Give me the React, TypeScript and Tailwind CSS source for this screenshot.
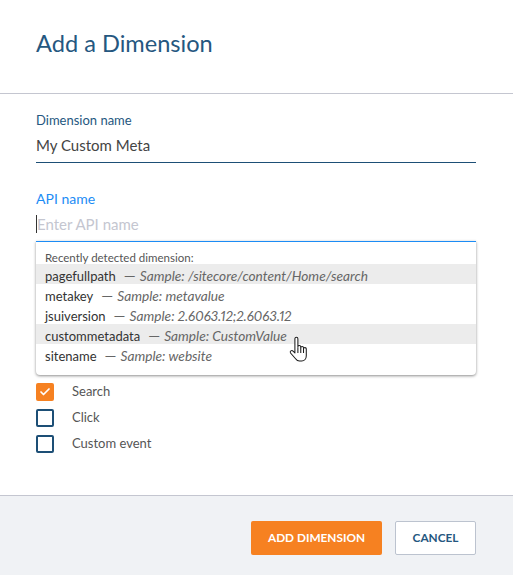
import React from 'react';
import { Check } from 'lucide-react';

const rows = [
  { name: 'pagefullpath', sample: 'Sample: /sitecore/content/Home/search', active: true },
  { name: 'metakey', sample: 'Sample: metavalue', active: false },
  { name: 'jsuiversion', sample: 'Sample: 2.6063.12;2.6063.12', active: false },
  { name: 'custommetadata', sample: 'Sample: CustomValue', active: true },
  { name: 'sitename', sample: 'Sample: website', active: false },
];

const events = [
  { label: 'Search', checked: true },
  { label: 'Click', checked: false },
  { label: 'Custom event', checked: false },
];

function HandCursor() {
  return (
    <svg className="absolute left-[252px] top-[125px]" width="23" height="28" viewBox="0 0 20 24">
      <path
        d="M6 2.2c0-1.6 2.6-1.6 2.6 0v7c0-1.4 2.5-1.4 2.5 0v.8c0-1.3 2.4-1.3 2.4 0v.8c0-1.2 2.4-1.2 2.4 .2v6c0 2.6-1.6 4.6-4 4.6H10c-1.6 0-2.6-.8-3.4-2L2.2 14.600c-.9-1.400 1-2.800 2.200-1.600L6 14.600z"
        fill="#fff"
        stroke="#1a1a1a"
        strokeWidth="0.9"
        strokeLinejoin="round"
      />
      <path d="M8.600 9.500v5M11.100 10v4.500M13.500 10.800v3.700" stroke="#1a1a1a" strokeWidth="0.9" fill="none" />
    </svg>
  );
}

export default function App() {
  return (
    <div className="w-[513px] h-[575px] flex flex-col bg-white overflow-hidden font-['Lato',sans-serif]">
      <div className="h-[94px] shrink-0 border-b border-[#c4c6d0] pl-9 pt-[27px]">
        <h1 className="text-[23.6px] leading-[32px] text-[#255780]">Add a Dimension</h1>
      </div>

      <div className="flex-1 pl-9 pr-[37px] pt-[17px]">
        <label className="block text-[13px] leading-[18px] text-[#255780]">Dimension name</label>
        <div className="h-[33px] mt-[1px] border-b border-[#1d4f76] text-[15px] leading-[31px] text-[#444]">My Custom Meta</div>

        <label className="block mt-[27px] text-[14px] leading-[18px] text-[#1c8cf5]">API name</label>
        <div className="relative h-[32px] mt-[3px]">
          <div className="flex items-start h-[31px] pt-[4px]">
            <span className="w-px h-[18px] bg-[#333]" />
            <span className="text-[15px] leading-[18px] text-[#c4c6d0]">Enter API name</span>
          </div>

          {/* suggestions menu */}
          <div className="absolute left-0 top-[30px] w-[440px] h-[134px] bg-white border-t border-[#1c8cf5] rounded-b-[4px] shadow-[0_1px_3px_rgba(0,0,0,0.45)] pt-[9px] z-10">
            <div className="pl-[9px] text-[11.5px] leading-[13px] text-[#555]">Recently detected dimension:</div>
            {rows.map(r => (
              <div key={r.name} className={`flex h-[20px] pl-[9px] leading-[24px] whitespace-nowrap ${r.active ? 'bg-[#ececec]' : ''}`}>
                <span className="text-[13px] text-[#333]">{r.name}</span>
                <span className="ml-[8px] w-[16px] text-[15px] leading-[23px] text-[#666]">—</span>
                <span className="text-[13.700px] italic text-[#666] [font-variant-numeric:proportional-nums]">{r.sample}</span>
              </div>
            ))}
          </div>
          <div className="absolute left-0 top-0 z-20 pointer-events-none">
            <HandCursor />
          </div>
        </div>

        <div className="mt-[140px] flex flex-col gap-[8px]">
          {events.map(e => (
            <div key={e.label} className="flex items-center h-[18px]">
              {e.checked ? (
                <span className="w-[18px] h-[18px] rounded-[2px] bg-[#f68121] flex items-center justify-center">
                  <Check className="w-[12px] h-[12px] text-white" strokeWidth={3.5} />
                </span>
              ) : (
                <span className="w-[18px] h-[18px] rounded-[2px] border-2 border-[#1d4f76]" />
              )}
              <span className="ml-[18px] text-[13px] text-[#555]">{e.label}</span>
            </div>
          ))}
        </div>
      </div>

      <div className="h-[80px] shrink-0 bg-[#f0f2f5] border-t border-[#c4c6d0] flex justify-end gap-[13px] pr-[37px] pt-[25px]">
        <button className="w-[131px] h-[34px] rounded-[2px] bg-[#f68121] text-white text-[11.800px] font-bold">ADD DIMENSION</button>
        <button className="w-[81px] h-[34px] rounded-[2px] bg-white border border-[#bcc3cf] text-[#255780] text-[11.800px] font-bold">CANCEL</button>
      </div>
    </div>
  );
}
